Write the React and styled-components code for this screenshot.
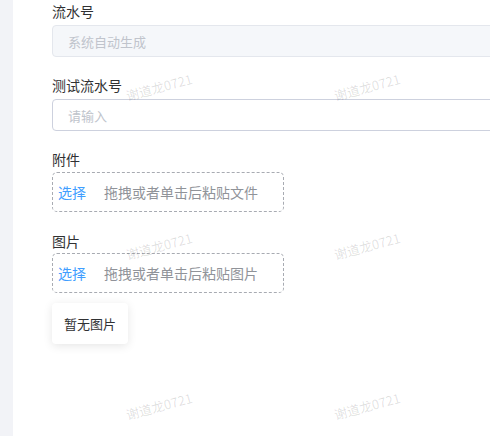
import React from "react";
import styled, { createGlobalStyle } from "styled-components";

const Global = createGlobalStyle`
  html, body { margin: 0; padding: 0; background: #fff; overflow: hidden; }
  body { font-family: "Noto Sans CJK SC", "Noto Sans", sans-serif; }
  * { box-sizing: border-box; }
`;

const Page = styled.div`
  position: relative;
  display: flex;
  width: 490px;
  height: 436px;
  overflow: hidden;
  background: #fff;
`;

const Strip = styled.div`
  width: 13px;
  flex: none;
  background: #f2f3f7;
`;

const Main = styled.div`
  flex: 1;
  padding-left: 39px;
  min-width: 0;
`;

const Form = styled.div`
  width: 560px;
  display: flex;
  flex-direction: column;
`;

const Item = styled.div`
  display: flex;
  flex-direction: column;
  margin-bottom: ${(p) => p.$mb}px;
`;

const Label = styled.div`
  height: 22px;
  line-height: 22px;
  font-size: 14px;
  color: #303133;
  margin-bottom: ${(p) => p.$mb}px;
`;

const Input = styled.div`
  height: 32px;
  border-radius: 4px;
  border: 1px solid ${(p) => (p.$disabled ? "#e4e7ed" : "#cdd1de")};
  background: ${(p) => (p.$disabled ? "#f5f7fa" : "#fff")};
  padding: 0 15px;
  display: flex;
  align-items: center;
  font-size: 13px;
  color: #c0c4cc;
`;

const Upload = styled.div`
  width: 232px;
  height: 40px;
  border: 1px dashed #a8abb2;
  border-radius: 5px;
  display: flex;
  align-items: center;
  padding-left: 5px;
  gap: 18px;
  font-size: 14px;
`;

const Pick = styled.span`
  color: #409eff;
`;

const Hint = styled.span`
  color: #909399;
`;

const Empty = styled.div`
  align-self: flex-start;
  margin-top: 10px;
  width: 76px;
  height: 41px;
  border-radius: 4px;
  background: #fff;
  box-shadow: 0 2px 10px rgba(0, 0, 0, 0.1);
  display: flex;
  align-items: center;
  justify-content: center;
  font-size: 13px;
  color: #303133;
`;

const Watermark = styled.span`
  position: absolute;
  left: ${(p) => p.$x}px;
  top: ${(p) => p.$y}px;
  transform: translate(-50%, -50%) rotate(-15deg);
  font-size: 13px;
  color: rgba(0, 0, 0, 0.13);
  white-space: nowrap;
  pointer-events: none;
`;

const marks = [
  [159, 87], [367, 87],
  [159, 246], [367, 246],
  [159, 406], [367, 406],
];

export default function App() {
  return (
    <Page>
      <Global />
      <Strip />
      <Main>
        <Form>
          <Item $mb={17}>
            <Label $mb={3}>流水号</Label>
            <Input $disabled>系统自动生成</Input>
          </Item>
          <Item $mb={17}>
            <Label $mb={3}>测试流水号</Label>
            <Input>请输入</Input>
          </Item>
          <Item $mb={18}>
            <Label $mb={2}>附件</Label>
            <Upload>
              <Pick>选择</Pick>
              <Hint>拖拽或者单击后粘贴文件</Hint>
            </Upload>
          </Item>
          <Item $mb={0}>
            <Label $mb={1}>图片</Label>
            <Upload>
              <Pick>选择</Pick>
              <Hint>拖拽或者单击后粘贴图片</Hint>
            </Upload>
            <Empty>暂无图片</Empty>
          </Item>
        </Form>
      </Main>
      {marks.map(([x, y], i) => (
        <Watermark key={i} $x={x} $y={y}>谢道龙0721</Watermark>
      ))}
    </Page>
  );
}
